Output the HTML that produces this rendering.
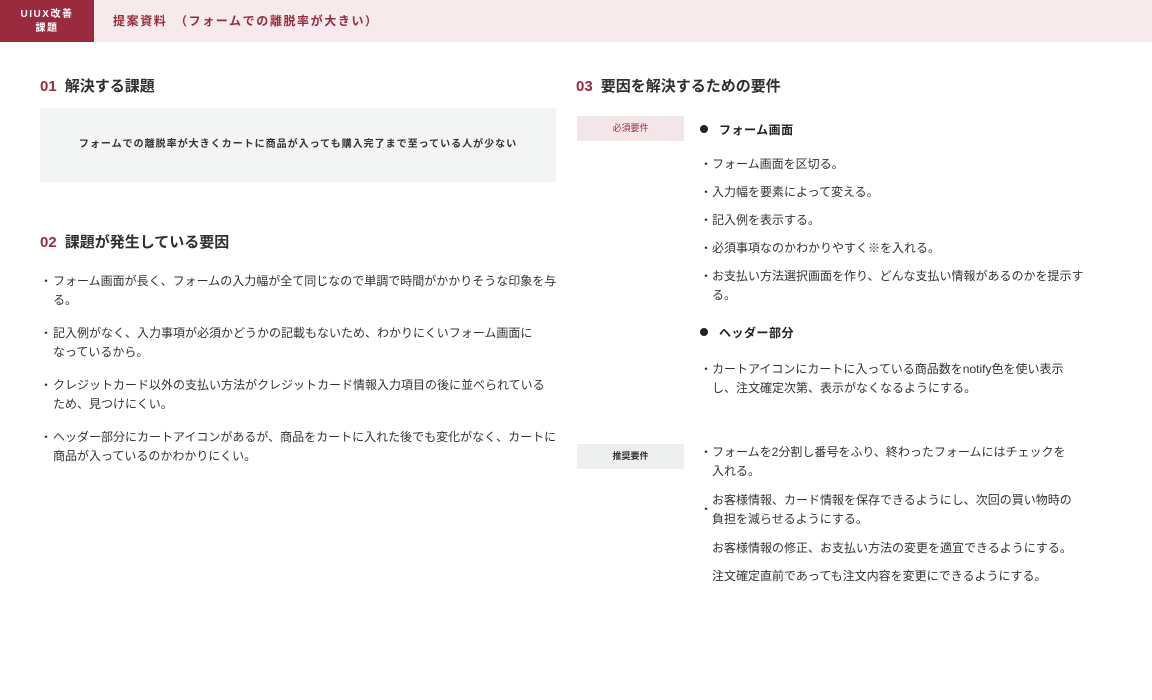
<!DOCTYPE html>
<html><head><meta charset="utf-8"><style>
*{margin:0;padding:0;box-sizing:border-box}
body{width:1152px;height:700px;background:#fff;font-family:"Liberation Sans","Noto Sans CJK JP",sans-serif;color:#333;position:relative;overflow:hidden}
.a{position:absolute;white-space:nowrap}
.t{font-size:12px;letter-spacing:0;line-height:19px;color:#333}
.r{letter-spacing:0}
.h{font-size:15px;font-weight:bold;color:#2c3033;letter-spacing:0}
.h b{color:#9a2a3e;margin-right:8px}
.dot{position:absolute;width:8px;height:8px;border-radius:50%;background:#222}
</style></head><body>
<div class="a" style="left:0;top:0;width:1152px;height:42px;background:#f5eaec"></div>
<div class="a" style="left:0;top:0;width:94px;height:42px;background:#9a2a3e;color:#fff;font-size:10px;font-weight:bold;letter-spacing:1.5px;text-align:center;line-height:14px;padding-top:8px">UIUX改善<br>課題</div>
<div class="a" style="left:113px;top:12px;font-size:12px;font-weight:bold;letter-spacing:1.6px;color:#9a2a3e">提案資料　（フォームでの離脱率が大きい）</div>

<div class="a h" style="left:40px;top:75px"><b>01</b>解決する課題</div>
<div class="a" style="left:40px;top:108px;width:516px;height:74px;background:#f3f4f4;text-align:center;line-height:74px;font-size:10px;font-weight:bold;color:#333;letter-spacing:1px">フォームでの離脱率が大きくカートに商品が入っても購入完了まで至っている人が少ない</div>

<div class="a h" style="left:40px;top:231px"><b>02</b>課題が発生している要因</div>
<div class="a t" style="left:40px;top:272px">・</div><div class="a t" style="left:53px;top:272px">フォーム画面が長く、フォームの入力幅が全て同じなので単調で時間がかかりそうな印象を与<br>る。</div>
<div class="a t" style="left:40px;top:324px">・</div><div class="a t" style="left:53px;top:324px">記入例がなく、入力事項が必須かどうかの記載もないため、わかりにくいフォーム画面に<br>なっているから。</div>
<div class="a t" style="left:40px;top:376px">・</div><div class="a t" style="left:53px;top:376px">クレジットカード以外の支払い方法がクレジットカード情報入力項目の後に並べられている<br>ため、見つけにくい。</div>
<div class="a t" style="left:40px;top:428px">・</div><div class="a t" style="left:53px;top:428px">ヘッダー部分にカートアイコンがあるが、商品をカートに入れた後でも変化がなく、カートに<br>商品が入っているのかわかりにくい。</div>

<div class="a h" style="left:576px;top:75px"><b>03</b>要因を解決するための要件</div>
<div class="a" style="left:577px;top:116px;width:107px;height:25px;background:#f3e6e9;color:#9a2a3e;font-size:9px;text-align:center;line-height:25px">必須要件</div>
<div class="dot" style="left:700px;top:125px"></div>
<div class="a" style="left:719px;top:121px;font-size:12px;font-weight:bold;color:#222;letter-spacing:.5px">フォーム画面</div>
<div class="a t" style="left:700px;top:155px">・</div><div class="a t r" style="left:712px;top:155px">フォーム画面を区切る。</div>
<div class="a t" style="left:700px;top:183px">・</div><div class="a t r" style="left:712px;top:183px">入力幅を要素によって変える。</div>
<div class="a t" style="left:700px;top:211px">・</div><div class="a t r" style="left:712px;top:211px">記入例を表示する。</div>
<div class="a t" style="left:700px;top:239px">・</div><div class="a t r" style="left:712px;top:239px">必須事項なのかわかりやすく※を入れる。</div>
<div class="a t" style="left:700px;top:267px">・</div><div class="a t r" style="left:712px;top:267px">お支払い方法選択画面を作り、どんな支払い情報があるのかを提示す<br>る。</div>
<div class="dot" style="left:700px;top:328px"></div>
<div class="a" style="left:719px;top:324px;font-size:12px;font-weight:bold;color:#222;letter-spacing:.5px">ヘッダー部分</div>
<div class="a t" style="left:700px;top:360px">・</div><div class="a t r" style="left:712px;top:360px">カートアイコンにカートに入っている商品数をnotify色を使い表示<br>し、注文確定次第、表示がなくなるようにする。</div>

<div class="a" style="left:577px;top:444px;width:107px;height:25px;background:#eeefef;color:#333;font-size:9px;font-weight:bold;text-align:center;line-height:25px">推奨要件</div>
<div class="a t" style="left:700px;top:443px">・</div><div class="a t r" style="left:712px;top:443px">フォームを2分割し番号をふり、終わったフォームにはチェックを<br>入れる。</div>
<div class="a t" style="left:700px;top:500px">・</div><div class="a t r" style="left:712px;top:491px">お客様情報、カード情報を保存できるようにし、次回の買い物時の<br>負担を減らせるようにする。</div>
<div class="a t r" style="left:712px;top:539px">お客様情報の修正、お支払い方法の変更を適宜できるようにする。</div>
<div class="a t r" style="left:712px;top:567px">注文確定直前であっても注文内容を変更にできるようにする。</div>
</body></html>
